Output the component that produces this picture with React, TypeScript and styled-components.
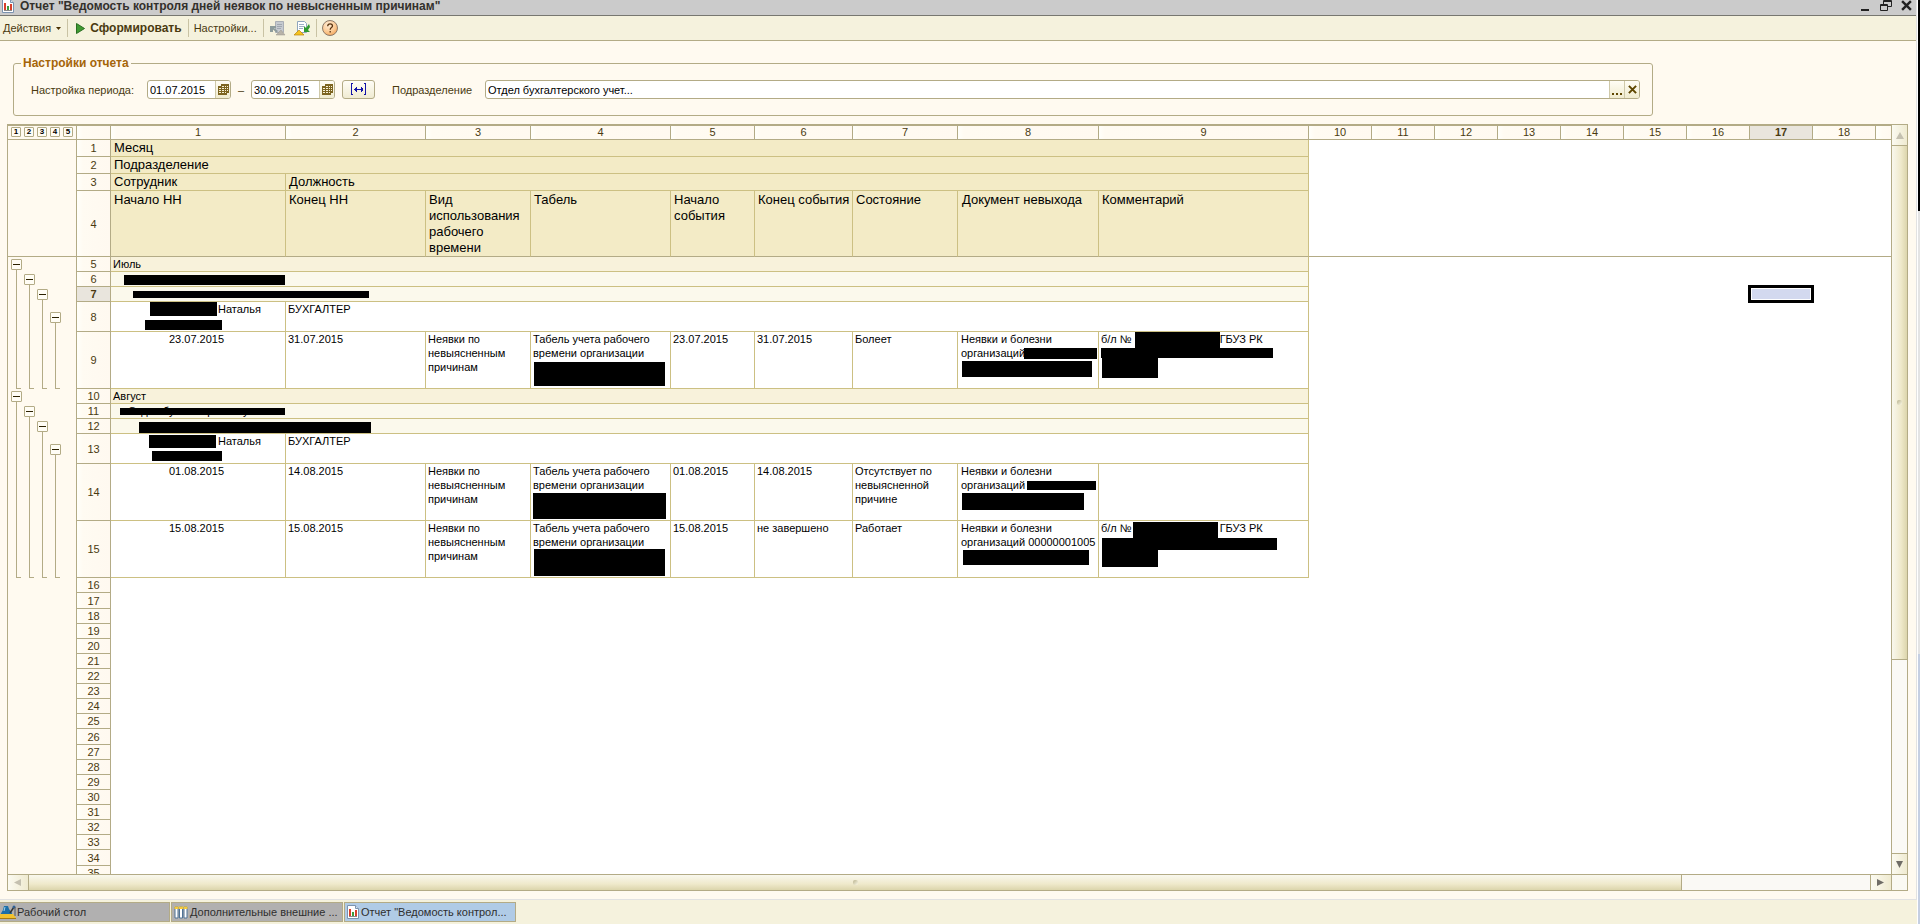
import React from "react";
import styled, { createGlobalStyle, css } from "styled-components";

const c = {
  page: "#fffaf0",
  bar: "#f5f2dd",
  frame: "#b3ab86",
  grid: "#ccc083",
  headFill: "#f3ebc6",
  level1: "#f8f2db",
  level2: "#fbf9ec",
  text: "#4a3a10",
};

const Global = createGlobalStyle`
  html, body { margin: 0; padding: 0; }
  body { font: 11px/14px "Liberation Sans", Arial, sans-serif; color: ${c.text}; background: ${c.page}; }
  *, *::before, *::after { box-sizing: border-box; }
  button { font: inherit; color: inherit; padding: 0; margin: 0; border: 0; background: none; }
`;

/* ---------- window frame ---------- */

const Desktop = styled.div`
  display: flex;
  height: 100vh;
  overflow: hidden;
`;

const MainWindow = styled.div`
  flex: 1;
  min-width: 0;
  display: flex;
  flex-direction: column;
  background: ${c.bar};
`;

const ReportWindow = styled.main`
  flex: 1;
  min-height: 0;
  display: flex;
  flex-direction: column;
  background: ${c.page};
  border-right: 1px solid #e2e2e2;
  border-bottom: 1px solid #e2e2e2;
`;

const Backdrop = styled.div`
  width: 3px;
  display: flex;
  flex-direction: column;
  border-left: 1px solid #ffffff;
`;

const BackdropPart = styled.div<{ $share: number; $color: string }>`
  flex: ${(p) => p.$share};
  background: ${(p) => p.$color};
`;

const TitleBar = styled.header`
  display: flex;
  align-items: center;
  gap: 6px;
  height: 16px;
  padding: 0 3px 4px 2px;
  background: #cbcbcb;
  border-bottom: 1px solid #777770;
  color: #33302c;
`;

const Title = styled.h1`
  flex: 1;
  margin: 0;
  font-size: 12px;
  line-height: 12px;
  font-weight: bold;
`;

const WindowButtons = styled.div`
  display: flex;
  gap: 9px;
  button { width: 12px; height: 12px; display: flex; }
`;

const Toolbar = styled.div`
  display: flex;
  align-items: center;
  height: 25px;
  padding-left: 3px;
  background: ${c.bar};
  border-bottom: 1px solid ${c.frame};
`;

const ToolButton = styled.button<{ $strong?: boolean }>`
  display: flex;
  align-items: center;
  gap: 5px;
  white-space: nowrap;
  font-size: ${(p) => (p.$strong ? 12 : 11)}px;
  font-weight: ${(p) => (p.$strong ? "bold" : "normal")};
`;

const IconGroup = styled.div`
  display: flex;
  gap: 8px;
`;

const ToolSeparator = styled.span<{ $after: number }>`
  width: 1px;
  height: 18px;
  margin: 0 ${(p) => p.$after}px 0 6px;
  background: #c9c3a4;
`;

/* ---------- report settings ---------- */

const Settings = styled.fieldset`
  display: flex;
  align-items: center;
  min-width: 0;
  height: 60px;
  margin: 15px 263px 8px 13px;
  padding: 10px 12px 0 17px;
  border: 1px solid ${c.frame};
  border-radius: 3px;
  legend {
    margin-left: -10px;
    padding: 0 2px;
    font-size: 12px;
    line-height: 14px;
    font-weight: bold;
    color: #a5650a;
  }
`;

const FieldLabel = styled.label<{ $width: number }>`
  width: ${(p) => p.$width}px;
  flex: none;
`;

const Field = styled.span<{ $wide?: boolean }>`
  display: flex;
  height: 19px;
  border: 1px solid ${c.frame};
  border-radius: 3px;
  background: #ffffff;
  overflow: hidden;
  ${(p) =>
    p.$wide
      ? css`flex: 1; min-width: 0;`
      : css`flex: none; width: 84px;`}
  input {
    flex: 1;
    min-width: 0;
    border: 0;
    padding: 0 2px;
    outline: none;
    background: transparent;
    font: inherit;
    color: #000000;
  }
`;

const FieldButton = styled.button`
  width: 15px;
  display: flex;
  align-items: center;
  justify-content: center;
  border-left: 1px solid #cfc9a9;
  background: linear-gradient(#fffdf4, #f0ebcf);
`;

const Dash = styled.span`
  width: 20px;
  text-align: center;
`;

const PeriodButton = styled.button`
  width: 33px;
  height: 19px;
  margin: 0 17px 0 7px;
  display: flex;
  align-items: center;
  justify-content: center;
  border: 1px solid ${c.frame};
  border-radius: 3px;
  background: linear-gradient(#fffdf6, #f0ebd2);
`;

/* ---------- spreadsheet ---------- */

const SheetFrame = styled.section`
  flex: 1;
  min-height: 0;
  margin: 0 8px 8px 7px;
  display: grid;
  grid-template: minmax(0, 1fr) 15px / minmax(0, 1fr) 15px;
  gap: 1px;
  border: 1px solid ${c.frame};
  background: ${c.frame};
`;

const Viewport = styled.div`
  overflow: hidden;
  background: #ffffff;
`;

const Sheet = styled.table`
  table-layout: fixed;
  width: 100%;
  border-collapse: separate;
  border-spacing: 0;
  color: #000000;
  td, th { padding: 0; vertical-align: top; text-align: left; font-weight: normal; }
`;

const Row = styled.tr<{ $h: number }>`
  height: ${(p) => p.$h}px;
`;

const ruler = css<{ $selected?: boolean }>`
  color: ${c.text};
  border: solid ${c.frame};
  border-width: 0 1px 1px 0;
  background: ${(p) => (p.$selected ? "#e9e5dd" : "linear-gradient(90deg, #fffffa, #fffbf2 6px, #fff9f0)")};
`;

const ColumnHead = styled.th<{ $selected?: boolean }>`
  ${ruler}
  && {
    height: 15px;
    border-top-width: 1px;
    line-height: 13px;
    text-align: center;
    font-weight: ${(p) => (p.$selected ? "bold" : "normal")};
    &:last-child { border-right-width: 0; }
  }
`;

const RowHead = styled.th<{ $selected?: boolean }>`
  ${ruler}
  && {
    text-align: center;
    vertical-align: middle;
    font-weight: ${(p) => (p.$selected ? "bold" : "normal")};
  }
`;

const OutlineCell = styled.td<{ $h: number; $closed?: boolean }>`
  height: ${(p) => p.$h}px;
  background: ${c.page};
  border-right: 1px solid ${c.frame};
  border-bottom: ${(p) => (p.$closed ? `1px solid ${c.frame}` : "0")};
`;

const OutlineHead = styled.th`
  background: ${c.page};
  border: solid ${c.frame};
  border-width: 1px 1px 1px 0;
`;

const Levels = styled.div`
  display: flex;
  gap: 3px;
  padding: 1px 0 0 3px;
`;

const LevelButton = styled.button`
  width: 10px;
  height: 10px;
  border: 1px solid ${c.frame};
  border-radius: 1px;
  background: #fffdf5;
  font-size: 8px;
  line-height: 8px;
  font-weight: bold;
  text-align: center;
`;

const Lanes = styled.div`
  display: flex;
  height: 100%;
  padding-left: 2px;
`;

const Lane = styled.div`
  width: 13px;
  display: flex;
  flex-direction: column;
`;

const Stem = styled.span<{ $visible?: boolean }>`
  flex: 1;
  width: 1px;
  margin-left: 6px;
  background: ${(p) => (p.$visible ? c.frame : "transparent")};
`;

const Foot = styled.span`
  width: 5px;
  height: 1px;
  margin-left: 6px;
  background: ${c.frame};
`;

const Collapse = styled.button`
  width: 11px;
  height: 11px;
  flex: none;
  margin-left: 1px;
  display: flex;
  align-items: center;
  justify-content: center;
  border: 1px solid ${c.frame};
  border-radius: 1px;
  background: #fffdf5;
  &::before { content: ""; width: 7px; height: 1px; background: #2b2000; }
`;

type Tone = "head" | "level1" | "level2" | "plain";
const toneFill: Record<Tone, string> = {
  head: c.headFill,
  level1: c.level1,
  level2: c.level2,
  plain: "#ffffff",
};

const Cell = styled.td<{ $tone: Tone; $frozen?: boolean; $indent?: number }>`
  && {
    position: relative;
    border: solid ${c.grid};
    border-width: 0 1px 1px 0;
    border-bottom-color: ${(p) => (p.$frozen ? c.frame : c.grid)};
    background: ${(p) => toneFill[p.$tone]};
    padding-left: ${(p) => p.$indent ?? (p.$tone === "head" ? 3 : 2)}px;
    padding-top: ${(p) => (p.$frozen ? 1 : 0)}px;
    ${(p) =>
      p.$tone === "head" &&
      css`
        font-size: 13px;
        line-height: 16px;
      `}
  }
`;

const Blank = styled.td<{ $frozen?: boolean }>`
  position: relative;
  border-bottom: ${(p) => (p.$frozen ? `1px solid ${c.frame}` : "0")};
`;

const ActiveCell = styled.div`
  position: absolute;
  inset: -2px -1px -1px -2px;
  border: 3px solid #000000;
  background: #d3d9ef;
  box-shadow: inset 0 0 0 1px #ffffff;
`;

type Box = [number, number, number, number];

const Redaction = styled.span<{ $box: Box }>`
  position: absolute;
  left: ${(p) => p.$box[0]}px;
  top: ${(p) => p.$box[1]}px;
  width: ${(p) => p.$box[2]}px;
  height: ${(p) => p.$box[3]}px;
  background: #000000;
`;

const Omission = styled.span`
  display: inline-block;
  width: 88px;
`;

/* ---------- scroll bars ---------- */

const ScrollBar = styled.div<{ $vertical?: boolean }>`
  display: flex;
  flex-direction: ${(p) => (p.$vertical ? "column" : "row")};
  gap: 1px;
`;

const ScrollButton = styled.button`
  flex: 0 0 20px;
  display: flex;
  align-items: center;
  justify-content: center;
  background: linear-gradient(90deg, #fbfaf1, #efead0);
`;

const Thumb = styled.div<{ $vertical?: boolean; $share: number }>`
  flex: ${(p) => p.$share};
  display: flex;
  align-items: center;
  justify-content: center;
  background: linear-gradient(${(p) => (p.$vertical ? "90deg" : "180deg")}, #f9f8ee, #efe9cb 60%, #dcd5ac);
  &::before {
    content: "";
    width: 5px;
    height: 5px;
    border-radius: 2px;
    background: linear-gradient(135deg, #b9b38f, #fbf8e6);
  }
`;

const Track = styled.div<{ $share: number }>`
  flex: ${(p) => p.$share};
  background: #faf9f5;
`;

const Corner = styled.div`
  background: #faf9f3;
`;

/* ---------- task bar ---------- */

const TaskBar = styled.nav`
  display: flex;
  gap: 1px;
  height: 24px;
  padding: 2px 0 1px;
`;

const TaskButton = styled.button<{ $active?: boolean }>`
  width: 172px;
  height: 20px;
  display: flex;
  align-items: center;
  gap: 2px;
  padding-left: 2px;
  border: 1px solid ${c.frame};
  background: ${(p) => (p.$active ? "#b0cbe6" : "#b1b0b0")};
  color: #2e2e2e;
  text-align: left;
  white-space: nowrap;
  &:first-child { width: 170px; padding-left: 0; gap: 0; border-left: 0; }
`;

/* ---------- icons ---------- */

const ReportIcon = () => (
  <svg width="12" height="14" viewBox="0 0 12 14">
    <path d="M.5.5h8l3 3v10H.5z" fill="#fff" stroke="#7b93b0" />
    <path d="M8.500.5v3h3" fill="#d4e2f0" stroke="#7b93b0" />
    <path d="M2 4h2v7H2z" fill="#d8402c" />
    <path d="M5 7h2v4H5z" fill="#3c9c3c" />
    <path d="M8 5h2v6H8z" fill="#d8402c" />
    <path d="M2 11.500h8" stroke="#888" />
  </svg>
);

const TableIcon = () => (
  <svg width="14" height="13" viewBox="0 0 14 13">
    <path d="M1 1h3v11H1zM5.500 1h3v11h-3zM10 1h3v11h-3z" fill="#fff" stroke="#4f7396" />
    <path d="M.5.5h4V3h-4zM5 .5h4V3H5zM9.500.5h4V3h-4z" fill="#f5c93b" />
  </svg>
);

const DesktopIcon = () => (
  <svg width="17" height="16" viewBox="0 0 17 16">
    <path d="M4 2h4l1 3 3 4v2H0l3-5z" fill="#1c6fa8" />
    <path d="M5 3l-1 4" stroke="#9fd3f0" />
    <path d="M10 9l4-6" stroke="#333" strokeWidth="1.500" />
    <circle cx="14" cy="3" r="1.500" fill="#2c5f96" />
    <path d="M15 3v9" stroke="#555" />
    <path d="M0 10h13l3 4v1H0z" fill="#f2c22e" />
    <path d="M0 14.500h16" stroke="#a87a10" />
  </svg>
);

const CaretIcon = () => (
  <svg width="5" height="3" viewBox="0 0 5 3">
    <path d="M0 0h5L2.500 3z" fill="#4a3000" />
  </svg>
);

const PlayIcon = () => (
  <svg width="9" height="11" viewBox="0 0 9 11">
    <path d="M.5.5v10l8-5z" fill="#3f9a32" stroke="#2a6e22" />
  </svg>
);

const RestoreSettingsIcon = () => (
  <svg width="16" height="16" viewBox="0 0 16 16">
    <path d="M5.500 1.500h8v11h-8z" fill="#c5cad0" stroke="#a9aeb5" />
    <path d="M7 4.500h5M7 6.500h5M7 8.500h4" stroke="#a0a7b0" />
    <path d="M0 6h6v2H4l4 3-1.500 1.500L3 9.500V12H0z" fill="#8d9c9c" />
    <path d="M6 15l5-5 4 5z" fill="#b7b3a8" stroke="#9a978f" strokeWidth=".5" />
  </svg>
);

const SaveSettingsIcon = () => (
  <svg width="16" height="16" viewBox="0 0 16 16">
    <path d="M3.500 1.500h7l2 2v9h-9z" fill="#fff" stroke="#8fa5bd" />
    <path d="M5 4.500h5M5 6.500h5M5 8.500h4" stroke="#9db0c4" />
    <path d="M15 4l-3 4-2-2v6h6l-2-2 2-3z" fill="#2f9a2f" />
    <path d="M0 15l5-5 5 5z" fill="#f5c21e" stroke="#b98510" strokeWidth=".7" />
  </svg>
);

const HelpIcon = () => (
  <svg width="16" height="16" viewBox="0 0 16 16">
    <defs>
      <radialGradient id="help" cx=".4" cy=".3" r=".8">
        <stop offset="0" stopColor="#ffeed8" />
        <stop offset=".6" stopColor="#fbc890" />
        <stop offset="1" stopColor="#ee9a4a" />
      </radialGradient>
    </defs>
    <circle cx="8" cy="8" r="7.500" fill="url(#help)" stroke="#8c7a6a" />
    <path d="M5.700 6.200c0-3 4.800-3 4.800-.3 0 1.700-2.300 1.600-2.300 3.800M8.200 11v1.500" fill="none" stroke="#5a3410" strokeWidth="1.300" />
  </svg>
);

const CalendarIcon = () => (
  <svg width="11" height="12" viewBox="0 0 11 12">
    <path d="M3 0h8v9H9v2H0V2h3z" fill="#7d6420" />
    <path d="M1 4h2v1H1zM4 4h2v1H4zM1 6h2v1H1zM4 6h2v1H4zM1 8h2v1H1zM4 8h2v1H4zM7 2h1v1H7zM9 2h1v1H9zM7 4h1v1H7zM9 4h1v1H9zM7 6h1v1H7zM9 6h1v1H9zM7 8h1v1H7zM4 2h2v1H4z" fill="#f7f1d6" />
  </svg>
);

const PeriodIcon = () => (
  <svg width="17" height="13" viewBox="0 0 17 13" fill="none" stroke="#1414a8" shapeRendering="crispEdges">
    <path d="M3 .5H1.500v11H3M14 .5h1.500v11H14M4 6.500h9" />
    <path d="M6 4v5M5 5v3M11 4v5M12 5v3" />
  </svg>
);

const CrossIcon = ({ color, size }: { color: string; size: number }) => (
  <svg width={size} height={size} viewBox="0 0 10 10">
    <path d="M1 1l8 8M9 1L1 9" stroke={color} strokeWidth="2.200" />
  </svg>
);

const DotsIcon = () => (
  <svg width="10" height="12" viewBox="0 0 10 12">
    <path d="M0 9h2v2H0zM4 9h2v2H4zM8 9h2v2H8z" fill="#5e4600" />
  </svg>
);

const arrows = {
  up: "M4 0l4 7H0z",
  down: "M0 0h7L3.500 7z",
  left: "M7 0v7L0 3.500z",
  right: "M0 0v7l7-3.500z",
};

const ArrowIcon = ({ dir, dim }: { dir: keyof typeof arrows; dim?: boolean }) => (
  <svg width="8" height="7" viewBox="0 0 8 7">
    <path d={arrows[dir]} fill={dim ? "#c4c0b0" : "#6f6c66"} />
  </svg>
);

/* ---------- data ---------- */

const OUTLINE = 69;
const RULER = 34;
const COLUMNS = [175, 140, 105, 140, 84, 98, 105, 141, 210, ...Array(9).fill(63)];
const FILLED = 9;
/* the unnumbered column after the last one takes the remaining width */
const TOTAL = COLUMNS.length + 1;
const SELECTED_COLUMN = 17;
const SELECTED_ROW = 7;

type CellData = { text?: React.ReactNode; span?: number; indent?: number; bars?: Box[] };
type Mark = "open" | "line" | "foot" | "none";
type RowData = { h: number; tone: Tone; outline?: Mark[]; cells: CellData[] };

const lines = (...items: string[]) =>
  items.map((item, i) => (
    <React.Fragment key={i}>
      {i > 0 && <br />}
      {item}
    </React.Fragment>
  ));

const sheetCard = ["Табель учета рабочего", "времени организации"];
const sickNote = (
  <>
    б/л №<Omission />ГБУЗ РК
  </>
);
const unclear = lines("Неявки по", "невыясненным", "причинам");
const feet: Mark[] = ["foot", "foot", "foot", "foot"];
const stems: Mark[] = ["line", "line", "line", "line"];

const rows: RowData[] = [
  { h: 17, tone: "head", cells: [{ text: "Месяц", span: 9 }] },
  { h: 17, tone: "head", cells: [{ text: "Подразделение", span: 9 }] },
  { h: 17, tone: "head", cells: [{ text: "Сотрудник" }, { text: "Должность", span: 8 }] },
  {
    h: 66,
    tone: "head",
    cells: [
      { text: "Начало НН" },
      { text: "Конец НН" },
      { text: lines("Вид", "использования", "рабочего", "времени") },
      { text: "Табель" },
      { text: lines("Начало", "события") },
      { text: "Конец события" },
      { text: "Состояние" },
      { text: "Документ невыхода", indent: 4 },
      { text: "Комментарий" },
    ],
  },
  { h: 15, tone: "level1", outline: ["open", "none", "none", "none"], cells: [{ text: "Июль", span: 9 }] },
  { h: 15, tone: "level2", outline: ["line", "open", "none", "none"], cells: [{ span: 9, bars: [[13, 3, 161, 10]] }] },
  { h: 15, tone: "level2", outline: ["line", "line", "open", "none"], cells: [{ span: 9, bars: [[22, 4, 236, 7]] }] },
  {
    h: 30,
    tone: "plain",
    outline: ["line", "line", "line", "open"],
    cells: [
      { text: "Наталья", indent: 107, bars: [[39, 0, 67, 14], [34, 18, 77, 10]] },
      { text: "БУХГАЛТЕР", span: 8 },
    ],
  },
  {
    h: 57,
    tone: "plain",
    outline: feet,
    cells: [
      { text: "23.07.2015", indent: 58 },
      { text: "31.07.2015" },
      { text: unclear },
      { text: lines(...sheetCard), bars: [[3, 30, 131, 24]] },
      { text: "23.07.2015" },
      { text: "31.07.2015" },
      { text: "Болеет" },
      { text: lines("Неявки и болезни", "организаций"), indent: 3, bars: [[66, 16, 73, 11], [4, 29, 130, 16]] },
      { text: sickNote, bars: [[36, 0, 85, 16], [2, 16, 172, 10], [3, 26, 56, 20]] },
    ],
  },
  { h: 15, tone: "level1", outline: ["open", "none", "none", "none"], cells: [{ text: "Август", span: 9 }] },
  {
    h: 15,
    tone: "level2",
    outline: ["line", "open", "none", "none"],
    cells: [{ text: "Отдел бухгалтерского учета", span: 9, indent: 17, bars: [[9, 4, 165, 7]] }],
  },
  { h: 15, tone: "level2", outline: ["line", "line", "open", "none"], cells: [{ span: 9, bars: [[28, 3, 232, 11]] }] },
  {
    h: 30,
    tone: "plain",
    outline: ["line", "line", "line", "open"],
    cells: [
      { text: "Наталья", indent: 107, bars: [[38, 1, 67, 13], [41, 17, 70, 10]] },
      { text: "БУХГАЛТЕР", span: 8 },
    ],
  },
  {
    h: 57,
    tone: "plain",
    outline: stems,
    cells: [
      { text: "01.08.2015", indent: 58 },
      { text: "14.08.2015" },
      { text: unclear },
      { text: lines(...sheetCard), bars: [[2, 29, 133, 26]] },
      { text: "01.08.2015" },
      { text: "14.08.2015" },
      { text: lines("Отсутствует по", "невыясненной", "причине") },
      { text: lines("Неявки и болезни", "организаций"), indent: 3, bars: [[69, 17, 69, 9], [4, 29, 122, 17]] },
      {},
    ],
  },
  {
    h: 57,
    tone: "plain",
    outline: feet,
    cells: [
      { text: "15.08.2015", indent: 58 },
      { text: "15.08.2015" },
      { text: unclear },
      { text: lines(...sheetCard), bars: [[3, 28, 131, 27]] },
      { text: "15.08.2015" },
      { text: "не завершено" },
      { text: "Работает" },
      { text: lines("Неявки и болезни", "организаций 00000001005"), indent: 3, bars: [[5, 29, 126, 15]] },
      { text: sickNote, bars: [[34, 1, 85, 16], [3, 17, 175, 12], [3, 29, 56, 17]] },
    ],
  },
];

const TALL_EMPTY_ROWS = [17, 26, 34];
const emptyRows = Array.from({ length: 20 }, (_, i) => i + rows.length + 1);

const Outline = ({ marks }: { marks: Mark[] }) => (
  <Lanes>
    {marks.map((mark, i) => (
      <Lane key={i}>
        {mark === "open" && (
          <>
            <Stem />
            <Collapse aria-label="Свернуть группу" />
            <Stem $visible />
          </>
        )}
        {(mark === "line" || mark === "foot") && <Stem $visible />}
        {mark === "foot" && <Foot />}
      </Lane>
    ))}
  </Lanes>
);

const Spreadsheet = () => (
  <Sheet>
    <colgroup>
      <col width={OUTLINE} />
      <col width={RULER} />
      {COLUMNS.map((w, i) => (
        <col key={i} width={w} />
      ))}
      <col />
    </colgroup>
    <thead>
      <Row $h={15}>
        <OutlineHead>
          <Levels>
            {[1, 2, 3, 4, 5].map((n) => (
              <LevelButton key={n}>{n}</LevelButton>
            ))}
          </Levels>
        </OutlineHead>
        <ColumnHead />
        {COLUMNS.map((_, i) => (
          <ColumnHead key={i} scope="col" $selected={i + 1 === SELECTED_COLUMN}>
            {i + 1}
          </ColumnHead>
        ))}
        <ColumnHead />
      </Row>
    </thead>
    <tbody>
      {rows.map((row, i) => {
        const n = i + 1;
        const frozen = n === 4;
        return (
          <Row key={n} $h={row.h}>
            {n === 1 && <OutlineCell rowSpan={4} $h={117} $closed />}
            {n > 4 && (
              <OutlineCell $h={row.h}>
                <Outline marks={row.outline ?? []} />
              </OutlineCell>
            )}
            <RowHead scope="row" $selected={n === SELECTED_ROW}>
              {n}
            </RowHead>
            {row.cells.map((cell, k) => (
              <Cell key={k} colSpan={cell.span} $tone={row.tone} $frozen={frozen} $indent={cell.indent}>
                {cell.text}
                {cell.bars?.map((box, b) => (
                  <Redaction key={b} $box={box} />
                ))}
              </Cell>
            ))}
            {n === SELECTED_ROW ? (
              <>
                <Blank colSpan={SELECTED_COLUMN - FILLED - 1} />
                <Blank>
                  <ActiveCell />
                </Blank>
                <Blank colSpan={TOTAL - SELECTED_COLUMN} />
              </>
            ) : (
              <Blank colSpan={TOTAL - FILLED} $frozen={frozen} />
            )}
          </Row>
        );
      })}
      {emptyRows.map((n) => {
        const h = TALL_EMPTY_ROWS.includes(n) ? 16 : 15;
        return (
          <Row key={n} $h={h}>
            <OutlineCell $h={h} />
            <RowHead scope="row">{n}</RowHead>
            <Blank colSpan={TOTAL} />
          </Row>
        );
      })}
    </tbody>
  </Sheet>
);

export default function App() {
  return (
    <Desktop>
      <Global />
      <MainWindow>
        <ReportWindow>
          <TitleBar>
            <ReportIcon />
            <Title>Отчет "Ведомость контроля дней неявок по невысненным причинам"</Title>
            <WindowButtons>
              <button aria-label="Свернуть">
                <svg width="12" height="12" viewBox="0 0 12 12"><path d="M2 9h8v2H2z" fill="#222" /></svg>
              </button>
              <button aria-label="Восстановить">
                <svg width="12" height="12" viewBox="0 0 12 12" fill="none" stroke="#222">
                  <path d="M3.500 4V.5h8v6H8M3 1.500h8M.5 4.500h7v6h-7zM1 5.500h6" />
                </svg>
              </button>
              <button aria-label="Закрыть"><CrossIcon color="#222" size={11} /></button>
            </WindowButtons>
          </TitleBar>
          <Toolbar>
            <ToolButton>Действия <CaretIcon /></ToolButton>
            <ToolSeparator $after={8} />
            <ToolButton $strong><PlayIcon />Сформировать</ToolButton>
            <ToolSeparator $after={5} />
            <ToolButton>Настройки...</ToolButton>
            <ToolSeparator $after={6} />
            <IconGroup>
              <ToolButton aria-label="Восстановить настройки" disabled><RestoreSettingsIcon /></ToolButton>
              <ToolButton aria-label="Сохранить настройки"><SaveSettingsIcon /></ToolButton>
            </IconGroup>
            <ToolSeparator $after={5} />
            <ToolButton aria-label="Справка"><HelpIcon /></ToolButton>
          </Toolbar>
          <Settings>
            <legend>Настройки отчета</legend>
            <FieldLabel htmlFor="from" $width={116}>Настройка периода:</FieldLabel>
            <Field>
              <input id="from" defaultValue="01.07.2015" />
              <FieldButton aria-label="Календарь"><CalendarIcon /></FieldButton>
            </Field>
            <Dash>–</Dash>
            <Field>
              <input aria-label="Конец периода" defaultValue="30.09.2015" />
              <FieldButton aria-label="Календарь"><CalendarIcon /></FieldButton>
            </Field>
            <PeriodButton aria-label="Выбрать период"><PeriodIcon /></PeriodButton>
            <FieldLabel htmlFor="department" $width={93}>Подразделение</FieldLabel>
            <Field $wide>
              <input id="department" defaultValue="Отдел бухгалтерского учет..." />
              <FieldButton aria-label="Выбрать"><DotsIcon /></FieldButton>
              <FieldButton aria-label="Очистить"><CrossIcon color="#5e4600" size={9} /></FieldButton>
            </Field>
          </Settings>
          <SheetFrame>
            <Viewport><Spreadsheet /></Viewport>
            <ScrollBar $vertical>
              <ScrollButton aria-label="Вверх"><ArrowIcon dir="up" dim /></ScrollButton>
              <Thumb $vertical $share={512} />
              <Track $share={193} />
              <ScrollButton aria-label="Вниз"><ArrowIcon dir="down" /></ScrollButton>
            </ScrollBar>
            <ScrollBar>
              <ScrollButton aria-label="Влево"><ArrowIcon dir="left" dim /></ScrollButton>
              <Thumb $share={1653} />
              <Track $share={188} />
              <ScrollButton aria-label="Вправо"><ArrowIcon dir="right" /></ScrollButton>
            </ScrollBar>
            <Corner />
          </SheetFrame>
        </ReportWindow>
        <TaskBar>
          <TaskButton><DesktopIcon />Рабочий стол</TaskButton>
          <TaskButton><TableIcon />Дополнительные внешние ...</TaskButton>
          <TaskButton $active><ReportIcon />Отчет "Ведомость контрол...</TaskButton>
        </TaskBar>
      </MainWindow>
      <Backdrop>
        <BackdropPart $share={211} $color="#000000" />
        <BackdropPart $share={443} $color="#e4e4e4" />
        <BackdropPart $share={270} $color="#c5cfe2" />
      </Backdrop>
    </Desktop>
  );
}
